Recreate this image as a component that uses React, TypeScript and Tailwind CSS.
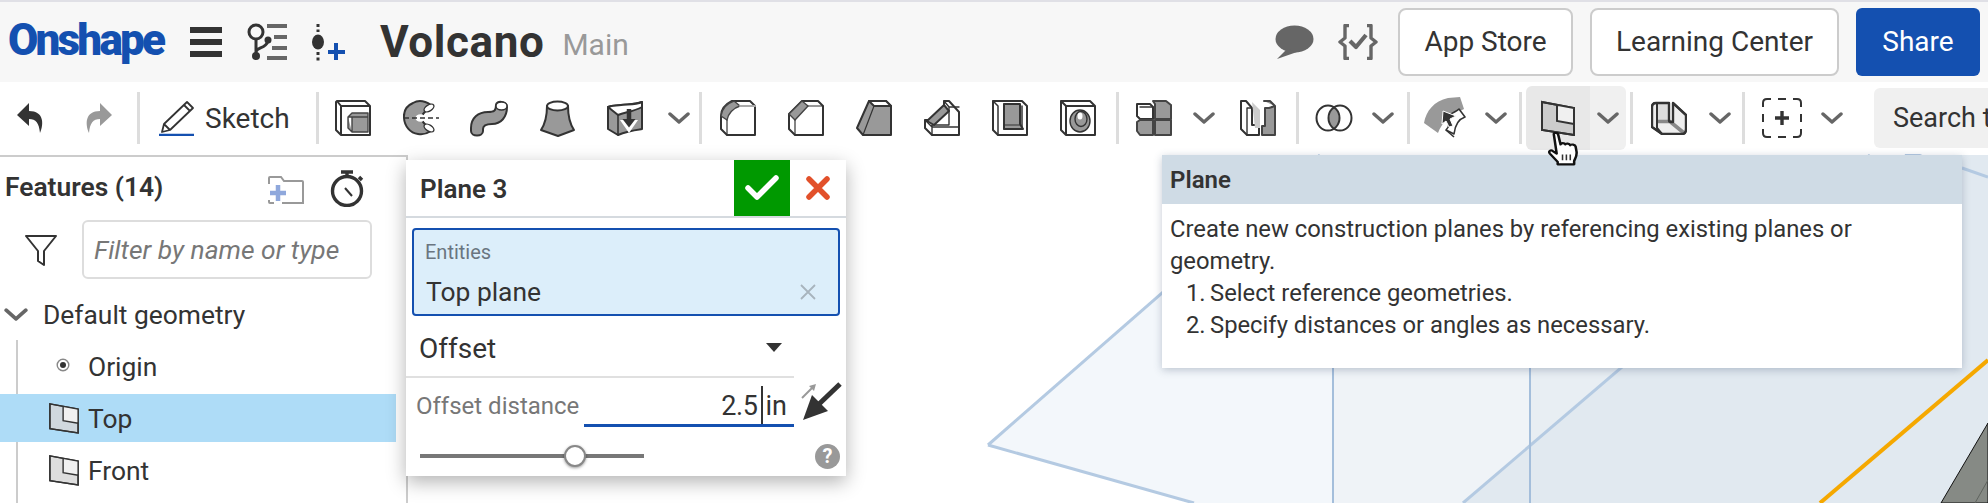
import React from "react";

const D = "#333333";

function Ic({ w = 36, h = 36, children, className = "" }: { w?: number; h?: number; children: React.ReactNode; className?: string }) {
  return (
    <svg width={w} height={h} viewBox={`0 0 ${w} ${h}`} fill="none" stroke={D} strokeWidth={2} strokeLinejoin="round" strokeLinecap="round" className={className}>
      {children}
    </svg>
  );
}

function Chevron({ size = 22, color = "#666666" }: { size?: number; color?: string }) {
  return (
    <svg width={size} height={(size * 12) / 22} viewBox="0 0 22 12" fill="none" stroke={color} strokeWidth={3.4} strokeLinecap="round" strokeLinejoin="round">
      <path d="M2 2 L11 10 L20 2" />
    </svg>
  );
}

function Sep({ className = "" }: { className?: string }) {
  return <div className={`w-[3px] h-[52px] flex-none bg-[#dddddd] ${className}`} />;
}

function Cell({ className, children }: { className: string; children?: React.ReactNode }) {
  return <div className={`flex flex-none items-center justify-center h-[52px] ${className}`}>{children}</div>;
}

const Extrude = () => (
  <Ic>
    <path d="M2 1 H30 L35 6 V35 H6 L1 30 V2 Z M2 1 L6 6 H35 M6 6 V35" fill="#fff" />
    <path d="M13 17 L17 13 H33 V32 H17 V17 H33 M13 17 H17 M13 17 V28 L17 32" fill="#999" stroke="#444" strokeWidth={1.4} />
  </Ic>
);
const Revolve = () => (
  <Ic>
    <path d="M28 5 C22 1 15 0 10 3 C3 6 0.5 12 1 18 C1.5 26 7 33 15 34 C20 35 25 33 28 31 L20 22 L20 14 Z" fill="#999" />
    <ellipse cx="17.5" cy="18" rx="5" ry="3.8" fill="#fff" stroke="none" />
    <ellipse cx="26" cy="8" rx="5.5" ry="3" fill="#fff" strokeWidth={1.4} transform="rotate(-32 26 8)" />
    <ellipse cx="26" cy="28" rx="5.5" ry="3" fill="#fff" strokeWidth={1.4} transform="rotate(32 26 28)" />
    <path d="M1 18 H36" strokeWidth={1.6} strokeDasharray="5 3" strokeLinecap="butt" />
  </Ic>
);
const Sweep = () => (
  <Ic w={38} h={37}>
    <path d="M26 5 C26 11 24 12 18 12 C8 12 1 18 1 28 V31 C1 37 13 37 13 31 V29 C13 25 16 24 22 24 C31 24 37 17 37 7 C37 1 26 0 26 5 Z" fill="#999" />
    <ellipse cx="31.5" cy="6" rx="5.5" ry="4" fill="#fff" strokeWidth={1.4} />
  </Ic>
);
const Loft = () => (
  <Ic w={35} h={37}>
    <path d="M7 6 C7 14 5 24 1 30 L18 36 L34 30 C30 24 28 14 28 6 Z" fill="#999" />
    <ellipse cx="17.5" cy="6" rx="10.5" ry="4.5" fill="#fff" />
  </Ic>
);
const Thicken = () => (
  <Ic w={36} h={36}>
    <path d="M1 7 C6 5 10 6 14 5 C20 4 28 5 35 2 V29 C28 30 20 31 11 35 L1 29 Z" fill="#999" />
    <path d="M1 7 L11 15 C18 12 26 12 35 7 V2 C28 5 20 4 14 5 C10 6 6 5 1 7 Z" fill="#fff" />
    <path d="M11 15 V35" strokeWidth={1.6} />
    <path d="M13 20 L31 20 L22 33 Z" fill="#fff" stroke="none" />
    <path d="M22 9 V21" strokeWidth={4.5} strokeLinecap="butt" />
    <path d="M15.5 19 H28.5 L22 27.5 Z" fill="#333" stroke="none" />
  </Ic>
);
const Fillet = () => (
  <Ic>
    <path d="M1 16 C1 9 6 4 12 1 H30 L35 6 V35 H7 L1 29 Z" fill="#fff" />
    <path d="M1 16 C2 8 8 3 14 1 L20 6 C13 8 8 14 7 20 Z" fill="#999" stroke="#444" strokeWidth={1.4} />
    <path d="M20 6 H35" stroke="#aaa" />
    <path d="M7 20 V35" strokeWidth={1.2} />
  </Ic>
);
const Chamfer = () => (
  <Ic>
    <path d="M1 14 L14 1 H30 L35 6 V35 H7 L1 29 Z" fill="#fff" />
    <path d="M1 14 L14 1 L20 6 L7 20 Z" fill="#999" stroke="#444" strokeWidth={1.4} />
    <path d="M20 6 H35 M7 20 V35" strokeWidth={1.2} />
  </Ic>
);
const Draft = () => (
  <Ic>
    <path d="M1 28 L13 1 H30 L35 6 V35 H7 Z" fill="#999" />
    <path d="M13 1 L18 6 H35 L30 1 Z" fill="#fff" />
    <path d="M18 6 L7 35" strokeWidth={1.2} />
  </Ic>
);
const Rib = () => (
  <Ic>
    <path d="M20 1 H25 L35 12 V35 H8 L1 28 V20 H6 L20 8 Z" fill="#fff" />
    <path d="M3 21 L20 5 L25 11 L10 25 Z" fill="#999" />
    <path d="M20 1 L25 7 V25 H8 M25 7 H35 M8 25 V35 M1 20 L8 27 H35" strokeWidth={1.4} />
  </Ic>
);
const Shell = () => (
  <Ic>
    <path d="M1 1 H30 L35 6 V35 H6 L1 30 Z" fill="#fff" />
    <path d="M1 1 L6 6 V35 M12 4 V29 H30 V6" strokeWidth={1.5} />
    <path d="M12 4 H28 V24 L31 29 H12 Z" fill="#999" />
    <path d="M12 25 H28" strokeWidth={1.2} />
  </Ic>
);
const Hole = () => (
  <Ic>
    <path d="M1 1 H30 L35 6 V35 H6 L1 30 Z M1 1 L6 6 H35 M6 6 V35" fill="#fff" />
    <ellipse cx="20" cy="21" rx="10" ry="11" fill="#999" strokeWidth={1.4} />
    <ellipse cx="21" cy="19" rx="6" ry="7.5" fill="#999" strokeWidth={1.4} />
    <ellipse cx="20" cy="16" rx="2.5" ry="3.5" fill="#fff" stroke="none" />
  </Ic>
);
const Pattern = () => (
  <Ic>
    <path d="M1 4 H14 L17 7 V19 H4 L1 16 Z" fill="#fff" />
    <path d="M4 7 H17" strokeWidth={1.4} />
    <path d="M17 1 H30 L35 5 V19 H19 V4 Z M1 22 L4 20 H17 V35 H4 L1 31 Z M19 20 H35 V35 H19 Z" fill="#999" stroke="#444" />
  </Ic>
);
const Mirror = () => (
  <Ic>
    <path d="M1 1 H6 L12 8 V25 H19 V35 H7 L1 29 Z" fill="#fff" />
    <path d="M7 8 H12 M7 8 V35" strokeWidth={1.4} />
    <path d="M12 2 L20 10 V28 H15 Z" fill="#ccc" stroke="none" />
    <path d="M24 1 H30 L35 6 V35 H22 V26 H25 V8 H29 L35 6" fill="#999" stroke="#444" />
  </Ic>
);
const Boolean = () => (
  <svg width="38" height="28" viewBox="0 0 38 28" fill="none" stroke={D} strokeWidth={2}>
    <path d="M19 3.5 C22 6 24 10 24 14 C24 18 22 22 19 24.5 C16 22 14 18 14 14 C14 10 16 6 19 3.5 Z" fill="#999" stroke="none" />
    <ellipse cx="13" cy="14" rx="11.5" ry="12.5" />
    <ellipse cx="25" cy="14" rx="11.5" ry="12.5" />
  </svg>
);
const SheetMetal = () => (
  <svg width="42" height="42" viewBox="0 0 42 42" fill="none">
    <path d="M0 26 C2 14 10 4 24 1 L36 0 L40 12 L32 16 C25 18 18 26 14 36 Z" fill="#999" />
    <path d="M27 17 C30 15 33 14 35 12 L41 20 C35 22 31 28 30 37 L22 33 C24 31 25 30 25 27" fill="#fff" stroke="#333" strokeWidth={1.6} strokeLinejoin="round" />
    <path d="M19 14 L32 19 L26 22 L29 29 L25 30 L22 24 L18 27 Z" fill="#333" stroke="#fff" strokeWidth={1} />
    <path d="M22 33 L30 40" stroke="#333" strokeWidth={1.6} />
  </svg>
);
const PlaneIc = ({ fill = "#cccccc", w = 34, h = 36, sw = 2 }: { fill?: string; w?: number; h?: number; sw?: number }) => (
  <svg width={w} height={h} viewBox="0 0 34 36" fill="none" stroke={D} strokeWidth={sw}>
    <path d="M1 2 L33 8 V35 L1 30 Z" fill={fill} />
    <path d="M16 5 L33 8 V24 L16 21 Z" fill="#f0f0f0" stroke="none" />
    <path d="M1 2 L33 8 V35 L1 30 Z M16 5 V21 L33 24" />
  </svg>
);
const SurfaceTool = () => (
  <Ic w={36} h={34}>
    <path d="M1 6 Q1 2 5 2 H18 V19 Q18 21 20 21 H22 V2 L35 14 V28 Q35 33 31 33 H11 L1 26 Z" fill="#eeeeee" />
    <path d="M6 3 H18 V20 H6 Z" fill="#dddddd" stroke="none" />
    <path d="M7 20.5 H19 L33 32" stroke="#888888" strokeWidth={3.6} strokeLinecap="butt" />
    <path d="M6 3 V27 L11 33" strokeWidth={2} />
    <path d="M1 6 Q1 2 5 2 H18 V19 Q18 21 20 21 H22 V2 L35 14 V28 Q35 33 31 33 H11 L1 26 Z" strokeWidth={2.4} />
  </Ic>
);

const Hand = () => (
  <svg width="32" height="34" viewBox="0 0 33 41" preserveAspectRatio="none" fill="none" className="absolute left-[1547px] top-[132px] z-30">
    <path
      d="M7 2.5 C7 0.5 11 0.5 11.5 3 L14 15 C14.5 13 18 13 19 15 C19.5 13.5 23 13.5 24 16 C25 14.5 29 15 29.5 17.5 L30.5 24 C31 29 29 32 28 35 L28 39 H11 L11 36 L3 26 C1 23 4 21 6 23 L10 26 Z"
      fill="#fff"
      stroke="#111"
      strokeWidth={2.6}
      strokeLinejoin="round"
    />
    <path d="M16 27 V34 M20 27 V34 M24 27 V34" stroke="#333" strokeWidth={1.6} />
  </svg>
);

function Canvas() {
  return (
    <svg className="flex-1 h-full block" viewBox="408 154 1580 349" preserveAspectRatio="none">
      <polygon points="988,445 1320,155 1988,155 1988,503 1194,503" fill="#f3f7fb" />
      <polygon points="1333,155 1988,155 1988,503 1333,503" fill="#eff3f7" />
      <polygon points="1530,155 1988,155 1988,503 1530,503" fill="#e8eef3" />
      <polygon points="1870,155 1988,155 1988,503 1463,503" fill="#e1e9f0" />
      <g stroke="#b4cae2" strokeWidth={3} fill="none">
        <path d="M988 445 L1320 155" />
        <path d="M988 445 L1194 503" />
        <path d="M1463 503 L1870 155" />
        <path d="M1962 168 L1988 177" />
        <path d="M1905 155 Q1915 152 1925 158" />
      </g>
      <g stroke="#a4bedb" strokeWidth={2} fill="none">
        <path d="M1333 155 V503" />
        <path d="M1530 155 V503" />
      </g>
      <path d="M1820 503 L1988 360" stroke="#f5a800" strokeWidth={4} fill="none" />
      <polygon points="1941,503 1988,423 1988,503" fill="#868a85" stroke="#111" strokeWidth={1} />
      <path d="M1975 503 L1988 480" stroke="#5f635e" strokeWidth={1} fill="none" />
    </svg>
  );
}

export default function App() {
  return (
    <div className="relative w-[1988px] h-[503px] overflow-hidden bg-white text-[#333333] flex flex-col font-['Roboto',sans-serif]">
      <div className="h-[2px] flex-none bg-[#e0e0e6]" />

      {/* Header */}
      <header className="h-[80px] flex-none flex items-center bg-[#f7f7f7] pr-[8px]">
        <div className="w-[190px] flex-none pl-[8px] text-[44px] leading-none font-black tracking-[-2.8px] text-[#1450b0] -translate-y-[2px]">Onshape</div>
        <div className="w-[32px] flex-none flex flex-col gap-[6px]">
          <div className="h-[6px] bg-[#333333]" />
          <div className="h-[6px] bg-[#333333]" />
          <div className="h-[6px] bg-[#333333]" />
        </div>
        <svg className="ml-[24px] flex-none" width="41" height="38" viewBox="0 0 41 38" fill="none">
          <circle cx="10" cy="9" r="7" stroke="#333" strokeWidth={3} />
          <path d="M10 16 V33 M10 29 C10 24 20 26 22 18" stroke="#333" strokeWidth={3} />
          <circle cx="22" cy="17" r="3.5" fill="#333" />
          <circle cx="10" cy="33" r="4" fill="#333" />
          <path d="M21 3 H41 M28 14 H41 M26 25 H41 M21 35 H41" stroke="#666" strokeWidth={4} />
        </svg>
        <svg className="ml-[25px] flex-none" width="33" height="38" viewBox="0 0 33 38" fill="none">
          <path d="M6 1 V9 M6 29 V38" stroke="#333" strokeWidth={3} strokeDasharray="3 2.5" />
          <ellipse cx="6" cy="19" rx="6" ry="7.5" fill="#333" />
          <path d="M24 20 V37 M16 29 H33" stroke="#1450b0" strokeWidth={4} />
        </svg>
        <div className="ml-[35px] text-[44px] leading-none font-bold tracking-[0.6px] text-[#333333]">Volcano</div>
        <div className="ml-[18px] mt-[6px] text-[30px] leading-none text-[#999999]">Main</div>

        <svg className="ml-auto flex-none" width="39" height="35" viewBox="0 0 39 35" fill="#666666">
          <ellipse cx="19.5" cy="14" rx="19" ry="13.5" />
          <path d="M12 24 L2 34 L22 27 Z" />
        </svg>
        <svg className="ml-[24px] flex-none" width="40" height="36" viewBox="0 0 40 36" fill="none" stroke="#666666" strokeWidth={3.4} strokeLinejoin="round">
          <path d="M11 1.5 H7 V14 L2 18 L7 22 V34.5 H11" />
          <path d="M29 1.5 H33 V14 L38 18 L33 22 V34.5 H29" />
          <path d="M12 17 L18 23 L28 11" strokeWidth={4.2} />
        </svg>
        <button className="ml-[20px] w-[175px] h-[68px] flex-none rounded-[8px] border-2 border-[#cccccc] bg-white text-[28px] text-[#333333]">App Store</button>
        <button className="ml-[17px] w-[249px] h-[68px] flex-none rounded-[8px] border-2 border-[#cccccc] bg-white text-[28px] text-[#333333]">Learning Center</button>
        <button className="ml-[17px] w-[124px] h-[68px] flex-none rounded-[6px] bg-[#1450b0] text-[28px] text-white">Share</button>
      </header>

      {/* Toolbar */}
      <div className="h-[72px] flex-none flex items-center bg-white">
        <Cell className="w-[60px]">
          <svg width="28" height="32" viewBox="0 0 28 32" fill="#333333"><path d="M13 1 L1 13 L13 24 V17 C20 17 23 21 24 31 C28 22 28 9 13 9 Z" /></svg>
        </Cell>
        <Cell className="w-[77px]">
          <svg width="28" height="32" viewBox="0 0 28 32" fill="#999999"><path d="M15 1 L27 13 L15 24 V17 C8 17 5 21 4 31 C0 22 0 9 15 9 Z" /></svg>
        </Cell>
        <Sep />
        <div className="w-[176px] h-[52px] flex-none flex items-center pl-[18px]">
          <svg width="38" height="36" viewBox="0 0 38 36" fill="none" stroke="#333" strokeWidth={1.8} strokeLinejoin="round">
            <path d="M29 2 L35 8 L12 30 L4 32 L6 24 Z M26 5 L32 11 M6 24 L12 30" fill="#fff" />
            <path d="M1 35 H36" stroke="#1450b0" strokeWidth={2.6} />
          </svg>
          <span className="ml-[9px] mt-[1px] text-[28px] leading-none">Sketch</span>
        </div>
        <Sep />
        <Cell className="w-[68px]"><Extrude /></Cell>
        <Cell className="w-[68px]"><Revolve /></Cell>
        <Cell className="w-[68px]"><Sweep /></Cell>
        <Cell className="w-[68px]"><Loft /></Cell>
        <Cell className="w-[68px]"><Thicken /></Cell>
        <Cell className="w-[40px]"><Chevron /></Cell>
        <Sep />
        <Cell className="w-[68px] ml-[2px]"><Fillet /></Cell>
        <Cell className="w-[68px]"><Chamfer /></Cell>
        <Cell className="w-[68px]"><Draft /></Cell>
        <Cell className="w-[68px]"><Rib /></Cell>
        <Cell className="w-[68px]"><Shell /></Cell>
        <Cell className="w-[68px]"><Hole /></Cell>
        <Sep className="ml-[4px]" />
        <Cell className="w-[70px]"><Pattern /></Cell>
        <Cell className="w-[30px]"><Chevron /></Cell>
        <Cell className="w-[77px]"><Mirror /></Cell>
        <Sep />
        <Cell className="w-[70px]"><Boolean /></Cell>
        <Cell className="w-[28px]"><Chevron /></Cell>
        <Sep className="ml-[10px]" />
        <Cell className="w-[70px]"><SheetMetal /></Cell>
        <Cell className="w-[32px]"><Chevron /></Cell>
        <Sep className="ml-[7px]" />
        <div className="ml-[4px] w-[100px] h-[64px] flex-none flex rounded-[6px] overflow-hidden">
          <div className="w-[64px] flex items-center justify-center bg-[#e8e8e8]"><PlaneIc /></div>
          <div className="w-[36px] flex items-center justify-center bg-[#f0f0f0]"><Chevron /></div>
        </div>
        <Sep className="ml-[4px]" />
        <Cell className="w-[72px]"><SurfaceTool /></Cell>
        <Cell className="w-[30px]"><Chevron /></Cell>
        <Sep className="ml-[7px]" />
        <Cell className="w-[74px]">
          <svg width="40" height="40" viewBox="0 0 40 40" fill="none" stroke="#333" strokeWidth={2}>
            <path d="M1 9 V5 Q1 1 5 1 H9 M16 1 H24 M31 1 H35 Q39 1 39 5 V9 M39 16 V24 M39 31 V35 Q39 39 35 39 H31 M24 39 H16 M9 39 H5 Q1 39 1 35 V31 M1 24 V16" />
            <path d="M20 13 V27 M13 20 H27" strokeWidth={3.4} />
          </svg>
        </Cell>
        <Cell className="w-[26px]"><Chevron /></Cell>
        <div className="ml-[29px] w-[200px] h-[60px] flex-none flex items-center pl-[19px] pt-[1px] rounded-[6px] bg-[#f0f0f0] text-[27px] whitespace-nowrap">Search tools...</div>
      </div>

      {/* Main */}
      <div className="flex-1 min-h-0 flex">
        <aside className="w-[408px] flex-none h-full mt-[1px] border-t-2 border-r-2 border-[#cccccc] bg-white flex flex-col">
          <div className="h-[63px] flex-none flex items-center pl-[5px]">
            <span className="w-[263px] -mt-[3px] text-[26.4px] font-semibold leading-none">Features (14)</span>
            <svg width="36" height="28" viewBox="0 0 36 28" fill="none" className="flex-none mt-[2px]">
              <path d="M1 8 V2 Q1 1 2 1 H13 L16 5 H34 Q35 5 35 6 V27 H14 M6 27 H2 Q1 27 1 26 V24" stroke="#999" strokeWidth={2} />
              <path d="M10 9 V25 M2 17 H18" stroke="#8fa8dc" strokeWidth={4.5} />
            </svg>
            <svg width="34" height="37" viewBox="0 0 34 37" fill="none" stroke="#333" className="ml-[26px] flex-none">
              <circle cx="17" cy="21" r="14.5" strokeWidth={3.4} />
              <path d="M11 2 H23 M17 2 V6 M29 7 L32 10" strokeWidth={3.4} />
              <path d="M15 18 L22 26" strokeWidth={2} />
            </svg>
          </div>
          <div className="h-[59px] flex-none flex items-center">
            <svg width="32" height="32" viewBox="0 0 32 32" fill="none" stroke="#333" strokeWidth={2} strokeLinejoin="round" className="ml-[25px] flex-none">
              <path d="M1 2 H31 L19 17 V31 L13 27 V17 Z" />
            </svg>
            <div className="ml-[25px] w-[290px] h-[59px] flex-none rounded-[6px] border-2 border-[#dddddd] flex items-center pl-[10px] pt-[3px] italic text-[26.4px] text-[#777777]">Filter by name or type</div>
          </div>
          <div className="h-[50px] mt-[11px] flex-none flex items-center pl-[4px]">
            <Chevron size={24} />
            <span className="ml-[15px] text-[26.4px] leading-none">Default geometry</span>
          </div>
          <div className="flex-1 ml-[16px] border-l-2 border-[#cccccc] flex flex-col gap-[4px]">
            <div className="h-[50px] flex-none flex items-center">
              <svg width="14" height="14" viewBox="0 0 14 14" fill="none" className="ml-[38px]">
                <circle cx="7" cy="7" r="5.8" stroke="#888" strokeWidth={1.4} />
                <circle cx="7" cy="7" r="3" fill="#333" />
              </svg>
              <span className="ml-[18px] mt-[4px] text-[26.4px] leading-none">Origin</span>
            </div>
            <div className="-ml-[18px] w-[396px] h-[48px] flex-none flex items-center bg-[#aedcf7]">
              <div className="ml-[49px]"><PlaneIc fill="#d0d8de" w={30} h={32} sw={1.6} /></div>
              <span className="ml-[9px] mt-[2px] text-[26.4px] leading-none">Top</span>
            </div>
            <div className="h-[48px] flex-none flex items-center">
              <div className="ml-[31px]"><PlaneIc fill="#dddddd" w={30} h={32} sw={1.6} /></div>
              <span className="ml-[9px] mt-[2px] text-[26.4px] leading-none">Front</span>
            </div>
          </div>
        </aside>
        <Canvas />
      </div>

      {/* Feature dialog */}
      <div className="absolute left-[406px] top-[160px] w-[440px] h-[316px] bg-white shadow-[0_6px_18px_rgba(0,0,0,0.3)] z-10 flex flex-col">
        <div className="h-[58px] flex-none flex border-b-2 border-[#d5dadf]">
          <span className="ml-[14px] mt-[16px] text-[26px] leading-none font-semibold">Plane 3</span>
          <div className="ml-auto w-[56px] h-[56px] bg-[#009900] flex items-center justify-center">
            <svg width="34" height="26" viewBox="0 0 34 26" fill="none" stroke="#fff" strokeWidth={5.5} strokeLinecap="round" strokeLinejoin="round"><path d="M3 13 L12 22 L31 3" /></svg>
          </div>
          <div className="w-[56px] h-[56px] flex items-center justify-center">
            <svg width="24" height="24" viewBox="0 0 24 24" fill="none" stroke="#e2502a" strokeWidth={5.5} strokeLinecap="round"><path d="M3 3 L21 21 M21 3 L3 21" /></svg>
          </div>
        </div>
        <div className="mt-[10px] mx-[6px] h-[88px] flex-none rounded-[4px] border-2 border-[#1450b0] bg-[#dceefa] flex flex-col relative">
          <span className="ml-[11px] mt-[12px] text-[20px] leading-none text-[#6a7580]">Entities</span>
          <div className="mt-[16px] flex items-center">
            <span className="ml-[12px] mt-[1px] text-[26.4px] leading-none">Top plane</span>
            <svg width="16" height="16" viewBox="0 0 16 16" fill="none" stroke="#a8b4bd" strokeWidth={1.8} className="ml-auto mr-[22px]"><path d="M1 1 L15 15 M15 1 L1 15" /></svg>
          </div>
        </div>
        <div className="w-[388px] h-[62px] flex-none flex items-center border-b-2 border-[#e0e0e0]">
          <span className="ml-[13px] mt-[6px] text-[28px] leading-none">Offset</span>
          <div className="ml-auto mr-[12px] mt-[2px] w-0 h-0 border-l-[8px] border-r-[8px] border-t-[9px] border-l-transparent border-r-transparent border-t-[#333333]" />
        </div>
        <div className="h-[50px] flex-none flex">
          <div className="w-[388px] flex-none flex">
            <span className="ml-[10px] mt-[16px] w-[168px] flex-none text-[24px] leading-none text-[#777777] whitespace-nowrap">Offset distance</span>
            <div className="flex-1 h-[49px] border-b-[3px] border-[#1450b0] flex items-end justify-end pr-[7px] pb-[4px] text-[27px] leading-none">
              <span className="tracking-[-0.4px]">2.5</span>
              <span className="w-[2px] h-[38px] mx-[3px] -mb-[4px] bg-[#333333] flex-none" />
              <span className="text-[27px]">in</span>
            </div>
          </div>
          <svg width="42" height="40" viewBox="0 0 42 40" fill="none" className="ml-[6px] mt-[4px] flex-none">
            <path d="M2 16 L14 4" stroke="#999" strokeWidth={2} />
            <path d="M9 4 L16 2 L14 9 Z" fill="#999" />
            <path d="M40 2 L18 23" stroke="#333" strokeWidth={5} />
            <path d="M3 38 L12 13 L28 29 Z" fill="#333" />
          </svg>
        </div>
        <div className="flex-1 relative flex items-start">
          <div className="ml-[14px] mt-[26px] w-[224px] h-[4px] bg-[#777777] relative">
            <div className="absolute left-[144px] -top-[9px] w-[22px] h-[22px] rounded-full bg-white border-2 border-[#888888] shadow-[0_1px_3px_rgba(0,0,0,0.4)]" />
          </div>
          <div className="ml-auto mr-[6px] mt-[16px] w-[25px] h-[25px] rounded-full bg-[#999999] text-white text-[20px] font-bold leading-[25px] text-center">?</div>
        </div>
      </div>

      {/* Tooltip */}
      <div className="absolute left-[1162px] top-[155px] w-[800px] h-[213px] bg-white shadow-[0_2px_8px_rgba(60,80,110,0.3)] z-20 flex flex-col">
        <div className="h-[49px] flex-none flex items-center pl-[8px] bg-[#cfdbe5] text-[24px] font-semibold">Plane</div>
        <div className="pl-[8px] pt-[9px] text-[23.8px] leading-[32px]">
          <p>Create new construction planes by referencing existing planes or<br />geometry.</p>
          <ol className="ml-[16px]">
            <li className="flex"><span className="w-[24px]">1.</span>Select reference geometries.</li>
            <li className="flex"><span className="w-[24px]">2.</span>Specify distances or angles as necessary.</li>
          </ol>
        </div>
      </div>

      <Hand />
    </div>
  );
}
